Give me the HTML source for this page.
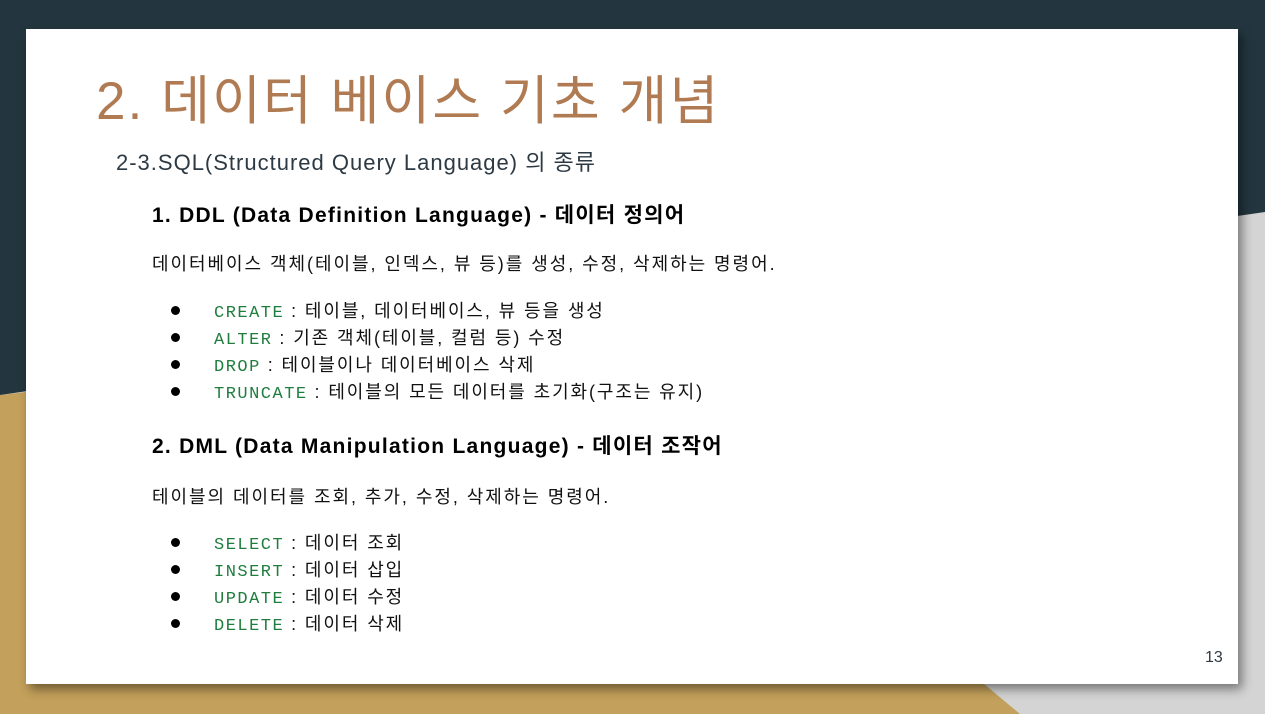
<!DOCTYPE html>
<html><head><meta charset="utf-8"><style>
body{margin:0;width:1265px;height:714px;overflow:hidden;position:relative;background:#d4d4d4;font-family:"Liberation Sans","Noto Sans CJK KR",sans-serif}
.bg{position:absolute;left:0;top:0}
.card{position:absolute;left:26px;top:29px;width:1212px;height:655px;background:#fff;box-shadow:4px 5px 10px rgba(0,0,0,.45)}
.t{position:absolute;white-space:nowrap}
h1{position:absolute;left:70px;top:30px;margin:0;font-weight:normal;font-size:53px;color:#b07b52;letter-spacing:2.1px}
.sub{left:90px;top:116px;font-size:22px;color:#2d3a44;letter-spacing:1px}
.h{left:126px;font-size:21px;font-weight:bold;color:#000;letter-spacing:1.25px}
.p{left:126px;font-size:18px;color:#111;letter-spacing:1.95px}
.li{left:145px;font-size:18px;color:#111;letter-spacing:1.9px}
.li b{display:inline-block;width:9px;height:9px;border-radius:50%;background:#000;margin-right:34px;vertical-align:2px}
code{font-family:"Liberation Mono",monospace;color:#1f7d3e;font-size:17px;letter-spacing:1.5px}
</style></head><body>
<svg class="bg" width="1265" height="714">
<polygon points="0,395 1020,714 1265,714 1265,0" fill="#d4d4d4"/>
<polygon points="0,395 0,714 1020,714 560,330" fill="#c3a05b"/>
<polygon points="0,0 1265,0 1265,212 0,395" fill="#23363f"/>
</svg>
<div class="card">
<h1>2. 데이터 베이스 기초 개념</h1>
<div class="t sub">2-3.SQL(Structured Query Language) 의 종류</div>
<div class="t h" style="top:170px">1. DDL (Data Definition Language) - 데이터 정의어</div>
<div class="t p" style="top:221px">데이터베이스 객체(테이블, 인덱스, 뷰 등)를 생성, 수정, 삭제하는 명령어.</div>
<div class="t li" style="top:268px"><b></b><code>CREATE</code> : 테이블, 데이터베이스, 뷰 등을 생성</div>
<div class="t li" style="top:295px"><b></b><code>ALTER</code> : 기존 객체(테이블, 컬럼 등) 수정</div>
<div class="t li" style="top:322px"><b></b><code>DROP</code> : 테이블이나 데이터베이스 삭제</div>
<div class="t li" style="top:349px"><b></b><code>TRUNCATE</code> : 테이블의 모든 데이터를 초기화(구조는 유지)</div>
<div class="t h" style="top:401px">2. DML (Data Manipulation Language) - 데이터 조작어</div>
<div class="t p" style="top:454px">테이블의 데이터를 조회, 추가, 수정, 삭제하는 명령어.</div>
<div class="t li" style="top:500px"><b></b><code>SELECT</code> : 데이터 조회</div>
<div class="t li" style="top:527px"><b></b><code>INSERT</code> : 데이터 삽입</div>
<div class="t li" style="top:554px"><b></b><code>UPDATE</code> : 데이터 수정</div>
<div class="t li" style="top:581px"><b></b><code>DELETE</code> : 데이터 삭제</div>
<div class="t" style="left:1179px;top:620px;font-size:16px;color:#2d3a44">13</div>
</div>
</body></html>
